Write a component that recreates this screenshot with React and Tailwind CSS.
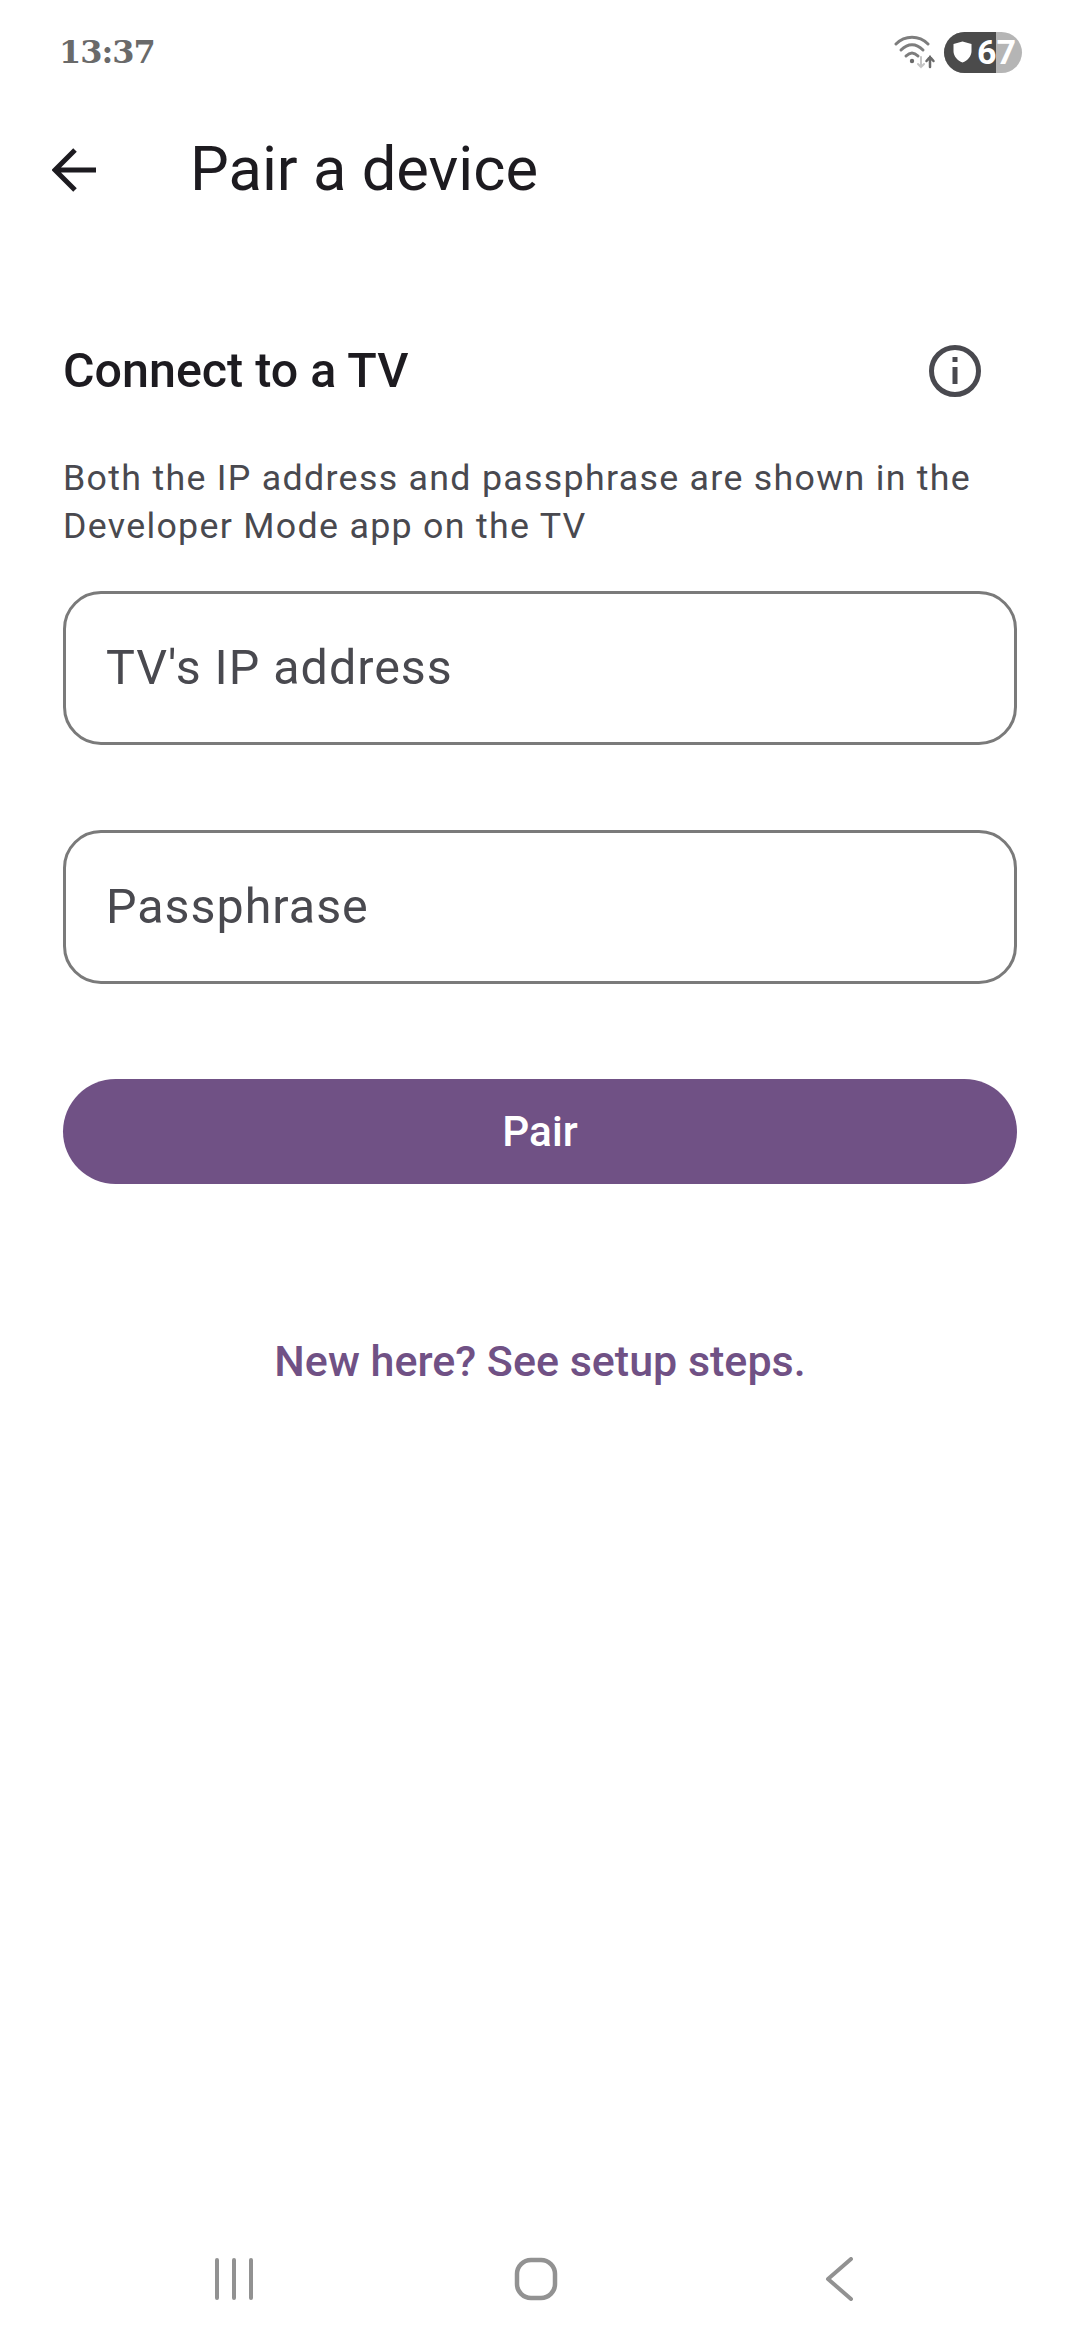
import React from "react";

const StatusBar = () => (
  <div className="flex items-center justify-between h-[104px] pl-[59px] pr-[58px]">
    <span className="text-[32px] leading-none font-bold text-[#6a6a6a] tracking-[-1px] font-['DejaVu_Serif',serif]">13:37</span>
    <div className="flex items-center gap-[6px]">
      <svg width="44" height="36" viewBox="0 0 44 36" fill="none" strokeLinecap="round">
        <path d="M2 10 C11 1 25 1 34 10" stroke="#7d7d7d" strokeWidth="3" />
        <path d="M7 16 C14 9 22 9 29 16" stroke="#7d7d7d" strokeWidth="3" />
        <path d="M12 22 C16 18 20 18 24 22" stroke="#7d7d7d" strokeWidth="3" />
        <circle cx="18" cy="27" r="2.2" fill="#6a6a6a" />
        <path d="M27 23 V33 M24 30 L27 33 L30 30" stroke="#c4c4c4" strokeWidth="2" />
        <path d="M36 33 V23 M32.500 27 L36 23 L39.500 27" stroke="#6a6a6a" strokeWidth="2.500" />
      </svg>
      <div className="relative flex items-center w-[78px] h-[41px] rounded-full overflow-hidden bg-[#b5b5b5]">
        <div className="absolute left-0 top-0 bottom-0 w-[52px] bg-[#4b4b4b]" />
        <svg className="relative ml-[9px]" width="19" height="22" viewBox="0 0 19 22">
          <path d="M9.500 0.500 L18.500 3 V10 C18.500 15.500 14.500 19.500 9.500 21.500 C4.500 19.500 0.500 15.500 0.500 10 V3 Z" fill="#fff" />
        </svg>
        <span className="relative ml-[5px] text-[34px] leading-none font-bold text-white font-['Roboto',sans-serif]">67</span>
      </div>
    </div>
  </div>
);

const Field = ({ label }) => (
  <div className="flex items-center h-[154px] px-[40px] rounded-[38px] border-[3px] border-[#7a7a7a] text-[48.400px] tracking-[1px] text-[#49494f]">
    {label}
  </div>
);

export default function App() {
  return (
    <div className="flex flex-col w-[1080px] h-[2340px] bg-white font-['Roboto',sans-serif]">
      <StatusBar />

      <div className="flex items-center h-[132px] pl-[52px]">
        <svg width="44" height="44" viewBox="0 0 44 44" fill="none" stroke="#1d1b20" strokeWidth="5">
          <path d="M44 22 H3 M23 2 L3 22 L23 42" />
        </svg>
        <h1 className="ml-[94px] text-[61.500px] leading-none text-[#1d1b20]">Pair a device</h1>
      </div>

      <div className="flex flex-col px-[63px] pt-[75px]">
        <div className="flex items-center justify-between h-[120px] pr-[36px]">
          <h2 className="text-[48.400px] font-medium leading-none text-[#1d1b20]">Connect to a TV</h2>
          <svg width="52" height="52" viewBox="0 0 52 52" fill="none">
            <circle cx="26" cy="26" r="23.500" stroke="#49494f" strokeWidth="5" />
            <rect x="23.500" y="12" width="5" height="5" fill="#49494f" />
            <rect x="23.500" y="22" width="5" height="17" fill="#49494f" />
          </svg>
        </div>
        <p className="mt-[24px] text-[35.750px] leading-[47.500px] tracking-[1.300px] text-[#49494f]">
          Both the IP address and passphrase are shown in the Developer Mode app on the TV
        </p>
        <div className="flex flex-col gap-[85px] mt-[41px]">
          <Field label="TV's IP address" />
          <Field label="Passphrase" />
        </div>
        <button className="h-[105px] mt-[95px] rounded-full bg-[#705185] text-[42.350px] font-medium text-white">Pair</button>
        <p className="mt-[145px] text-center text-[43px] font-medium text-[#705185]">New here? See setup steps.</p>
      </div>

      <div className="mt-auto mb-[16px] flex items-center h-[90px] pl-[215px]">
        <svg width="44" height="44" viewBox="0 0 44 44" stroke="#929292" strokeWidth="4" strokeLinecap="round">
          <path d="M2 3 V41 M19 3 V41 M36 3 V41" />
        </svg>
        <svg className="ml-[255px]" width="44" height="44" viewBox="0 0 44 44" fill="none" stroke="#929292" strokeWidth="4.500">
          <rect x="3" y="3" width="38" height="38" rx="14" />
        </svg>
        <svg className="ml-[266px]" width="30" height="44" viewBox="0 0 30 44" fill="none" stroke="#929292" strokeWidth="4" strokeLinecap="round" strokeLinejoin="round">
          <path d="M27 2 L4 22 L27 42" />
        </svg>
      </div>
    </div>
  );
}
